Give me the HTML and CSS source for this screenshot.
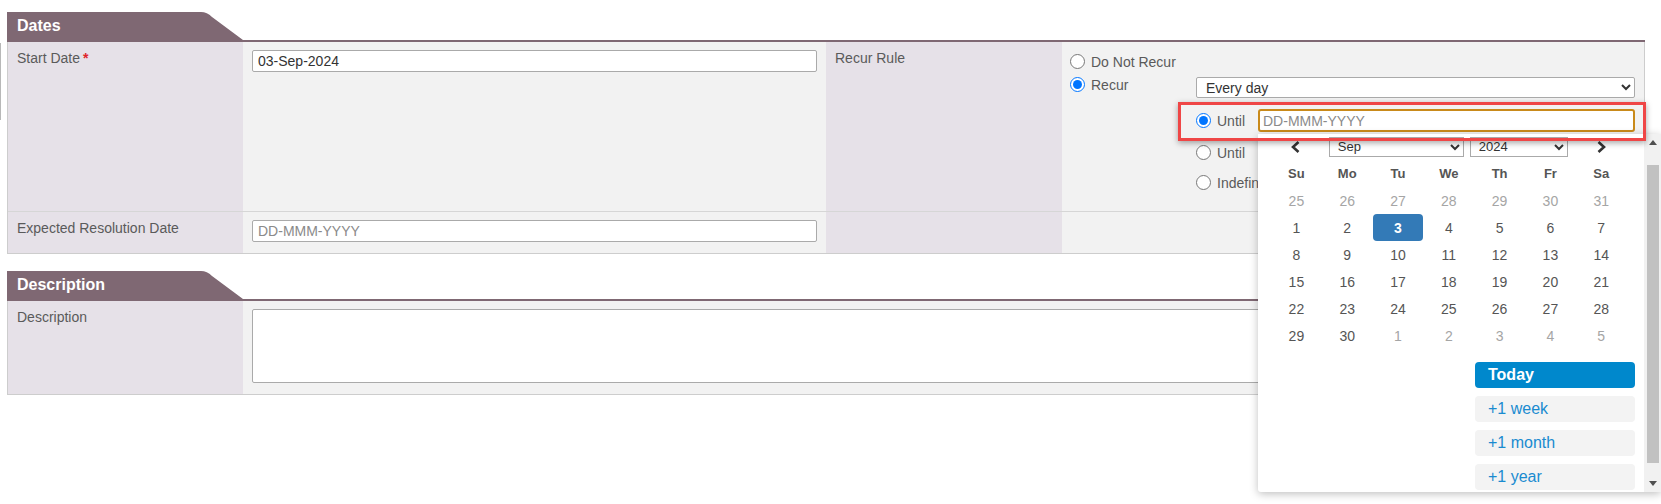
FILE: index.html
```html
<!DOCTYPE html>
<html lang="en">
<head>
  <meta charset="UTF-8" />
  <title>Dates</title>
  <link rel="stylesheet" href="styles.css">
</head>
<body>
  <div class="page">
    <div class="edge"></div>

    <main class="form">
      <section class="panel">
        <div class="panel-head"><div class="tab">Dates</div></div>
        <div class="grid dates">
          <div class="lbl">Start Date<span class="req">*</span></div>
          <div class="val"><input class="txt" type="text" value="03-Sep-2024" /></div>
          <div class="lbl">Recur Rule</div>
          <div class="val recur">
            <label class="opt"><input type="radio" name="recur" /><span>Do Not Recur</span></label>
            <div class="recur-row">
              <label class="opt"><input type="radio" name="recur" checked /><span>Recur</span></label>
              <div class="sub">
                <select class="sel">
                  <option>Every day</option>
                  <option>Every week</option>
                  <option>Every month</option>
                </select>
                <div class="opt until">
                  <input type="radio" name="end" checked />
                  <span class="lab">Until</span>
                  <input class="focus-input" type="text" placeholder="DD-MMM-YYYY" />
                </div>
                <div class="opt until2">
                  <input type="radio" name="end" />
                  <span class="lab">Until</span>
                </div>
                <div class="opt indef">
                  <input type="radio" name="end" />
                  <span>Indefinitely</span>
                </div>
              </div>
            </div>
          </div>
          <div class="lbl row2">Expected Resolution Date</div>
          <div class="val row2"><input class="txt" type="text" placeholder="DD-MMM-YYYY" /></div>
          <div class="lbl row2"></div>
          <div class="val row2"></div>
        </div>
      </section>

      <section class="panel">
        <div class="panel-head"><div class="tab">Description</div></div>
        <div class="grid desc">
          <div class="lbl">Description</div>
          <div class="val"><textarea class="area"></textarea></div>
        </div>
      </section>
    </main>

    <!-- date picker popup for the "Until" field -->
    <div class="datepicker">
      <div class="dp-body">
        <div class="dp-grid dp-head">
          <span class="nav"><svg width="12" height="12" viewBox="0 0 12 12"><path d="M8.5 1 L3 6 L8.5 11" fill="none" stroke="#333" stroke-width="2.6"/></svg></span>
          <div class="dp-selects">
            <select class="m"><option>Sep</option></select>
            <select class="y"><option>2024</option></select>
          </div>
          <span class="nav"><svg width="12" height="12" viewBox="0 0 12 12"><path d="M3.5 1 L9 6 L3.5 11" fill="none" stroke="#333" stroke-width="2.6"/></svg></span>
        </div>
        <div class="dp-grid">
          <span class="dow">Su</span><span class="dow">Mo</span><span class="dow">Tu</span><span class="dow">We</span><span class="dow">Th</span><span class="dow">Fr</span><span class="dow">Sa</span>

          <span class="day old">25</span><span class="day old">26</span><span class="day old">27</span><span class="day old">28</span><span class="day old">29</span><span class="day old">30</span><span class="day old">31</span>
          <span class="day">1</span><span class="day">2</span><span class="day on">3</span><span class="day">4</span><span class="day">5</span><span class="day">6</span><span class="day">7</span>
          <span class="day">8</span><span class="day">9</span><span class="day">10</span><span class="day">11</span><span class="day">12</span><span class="day">13</span><span class="day">14</span>
          <span class="day">15</span><span class="day">16</span><span class="day">17</span><span class="day">18</span><span class="day">19</span><span class="day">20</span><span class="day">21</span>
          <span class="day">22</span><span class="day">23</span><span class="day">24</span><span class="day">25</span><span class="day">26</span><span class="day">27</span><span class="day">28</span>
          <span class="day">29</span><span class="day">30</span><span class="day old">1</span><span class="day old">2</span><span class="day old">3</span><span class="day old">4</span><span class="day old">5</span>
        </div>
        <div class="dp-btns">
          <div class="dp-btn today">Today</div>
          <div class="dp-btn">+1 week</div>
          <div class="dp-btn">+1 month</div>
          <div class="dp-btn">+1 year</div>
        </div>
      </div>
      <div class="dp-scroll">
        <div class="sb-arrow"><svg width="8" height="5" viewBox="0 0 8 5"><path d="M0 5 L4 0 L8 5 Z" fill="#505050"/></svg></div>
        <div class="sb-thumb"></div>
        <div class="sb-arrow down"><svg width="8" height="5" viewBox="0 0 8 5"><path d="M0 0 L4 5 L8 0 Z" fill="#505050"/></svg></div>
      </div>
    </div>

    <div class="callout"></div>
  </div>
</body>
</html>
```

FILE: styles.css
```css
* {
  box-sizing: border-box;
}
body {
  margin: 0;
  background: #fff;
  color: #5a5a5a;
  font-family: "Liberation Sans", Arial, sans-serif;
  font-size: 14px;
}
.page {
  position: relative;
  display: flex;
  align-items: flex-start;
  width: 1661px;
  height: 504px;
  overflow: hidden;
}
.edge {
  flex: none;
  width: 1px;
  height: 77px;
  margin-top: 43px;
  background: #b8b8b8;
}
.form {
  flex: none;
  width: 1638px;
  margin-left: 6px;
}
.panel {
  margin-top: 12px;
}
.panel + .panel {
  margin-top: 17px;
}
.panel-head {
  height: 30px;
  border-bottom: 2px solid #7f6873;
}
.tab {
  width: 236px;
  height: 28px;
  padding-left: 10px;
  background: #7f6873;
  color: #fff;
  font-size: 16px;
  font-weight: bold;
  line-height: 28px;
  clip-path: path('M0 0 H194 Q200 0 205 5 L236 28 H0 Z');
}
.grid {
  display: grid;
  border: 1px solid #cdcdcd;
  border-top: 0;
}
.dates {
  grid-template-columns: 235px 583px 236px 1fr;
  grid-template-rows: 169px 42px;
}
.desc {
  grid-template-columns: 235px 1fr;
  grid-template-rows: 93px;
}
.lbl {
  background: #e6e1e8;
  padding: 8px 9px;
}
.val {
  background: #f2f2f2;
  padding: 8px 9px;
}
.row2 {
  border-top: 1px solid #d6d6d6;
}
.req {
  color: #e0242a;
  margin-left: 3px;
  font-weight: bold;
}
.txt,
.sel,
.area,
.focus-input {
  font-family: "Liberation Sans", Arial, sans-serif;
  font-size: 14px;
  color: #333;
  background: #fff;
}
.txt {
  display: block;
  width: 100%;
  height: 22px;
  padding: 0 5px;
  border: 1px solid #aaa;
  border-radius: 2px;
}
.txt::placeholder,
.focus-input::placeholder {
  color: #8a8a8a;
}
.area {
  display: block;
  width: 100%;
  height: 74px;
  border: 1px solid #aaa;
  border-radius: 2px;
  resize: none;
}

/* recur rule */
.recur {
  padding: 8px 9px 0 8px;
}
.opt {
  display: flex;
  align-items: center;
  height: 23px;
  white-space: nowrap;
}
.opt input[type="radio"] {
  flex: none;
  width: 15px;
  height: 15px;
  margin: 0 6px 0 0;
  accent-color: #0075ff;
}
.recur-row {
  display: flex;
  align-items: flex-start;
}
.recur-row > .opt {
  flex: none;
  width: 126px;
}
.sub {
  flex: 1;
}
.sel {
  display: block;
  width: 100%;
  height: 21px;
  margin-top: 4px;
  padding: 0 5px;
  border: 1px solid #aaa;
  border-radius: 2px;
}
.until {
  margin-top: 11px;
}
.until2 {
  margin-top: 9px;
}
.indef {
  margin-top: 7px;
}
.lab {
  width: 41px;
}
.focus-input {
  flex: 1;
  height: 23px;
  padding: 0 3px;
  border: 2px solid #c98a1a;
  border-radius: 3px;
  outline: none;
}

/* date picker */
.datepicker {
  position: absolute;
  left: 1258px;
  top: 134px;
  z-index: 5;
  display: flex;
  width: 403px;
  height: 358px;
  background: #fff;
  border-radius: 0 0 3px 3px;
  box-shadow: 0 2px 8px rgba(0, 0, 0, 0.25);
}
.dp-body {
  flex: 1;
  overflow: hidden;
  padding: 0 9px 0 13px;
}
.dp-grid {
  display: grid;
  grid-template-columns: repeat(7, 50.8px);
  grid-auto-rows: 27px;
  align-items: center;
  justify-items: center;
}
.dp-head {
  margin-top: -1px;
}
.nav {
  display: flex;
}
.dp-selects {
  grid-column: span 5;
  justify-self: stretch;
  display: flex;
  gap: 6px;
  padding: 0 7px;
}
.dp-selects select {
  height: 20px;
  padding: 0 4px;
  border: 1px solid #aaa;
  border-radius: 0;
  background: #fff;
  color: #333;
  font-family: "Liberation Sans", Arial, sans-serif;
  font-size: 13px;
}
.m {
  width: 135px;
}
.y {
  width: 98px;
}
.dow {
  color: #555;
  font-size: 13px;
  font-weight: bold;
}
.day {
  display: flex;
  align-items: center;
  justify-content: center;
  width: 100%;
  height: 100%;
  color: #555;
}
.day.old {
  color: #a5a5a5;
}
.day.on {
  background: #337ab7;
  color: #fff;
  font-weight: bold;
  border-radius: 4px;
}
.dp-btns {
  display: flex;
  flex-direction: column;
  align-items: flex-end;
  gap: 8px;
  margin-top: 13px;
}
.dp-btn {
  width: 160px;
  height: 26px;
  padding-left: 13px;
  border-radius: 4px;
  background: #f3f3f3;
  color: #1a8bd0;
  font-size: 16px;
  line-height: 26px;
}
.dp-btn.today {
  background: #0088cc;
  color: #fff;
  font-weight: bold;
}
.dp-scroll {
  flex: none;
  display: flex;
  flex-direction: column;
  align-items: center;
  width: 17px;
  background: #f1f1f1;
}
.sb-arrow {
  display: flex;
  align-items: center;
  justify-content: center;
  height: 17px;
}
.sb-arrow.down {
  margin-top: auto;
}
.sb-thumb {
  width: 12px;
  height: 298px;
  margin-top: 14px;
  background: #c1c1c1;
}

/* red annotation box */
.callout {
  position: absolute;
  left: 1178px;
  top: 102px;
  z-index: 6;
  width: 468px;
  height: 39px;
  border: 3px solid #ef4646;
  box-shadow: 0 2px 6px rgba(0, 0, 0, 0.35);
  pointer-events: none;
}
```
